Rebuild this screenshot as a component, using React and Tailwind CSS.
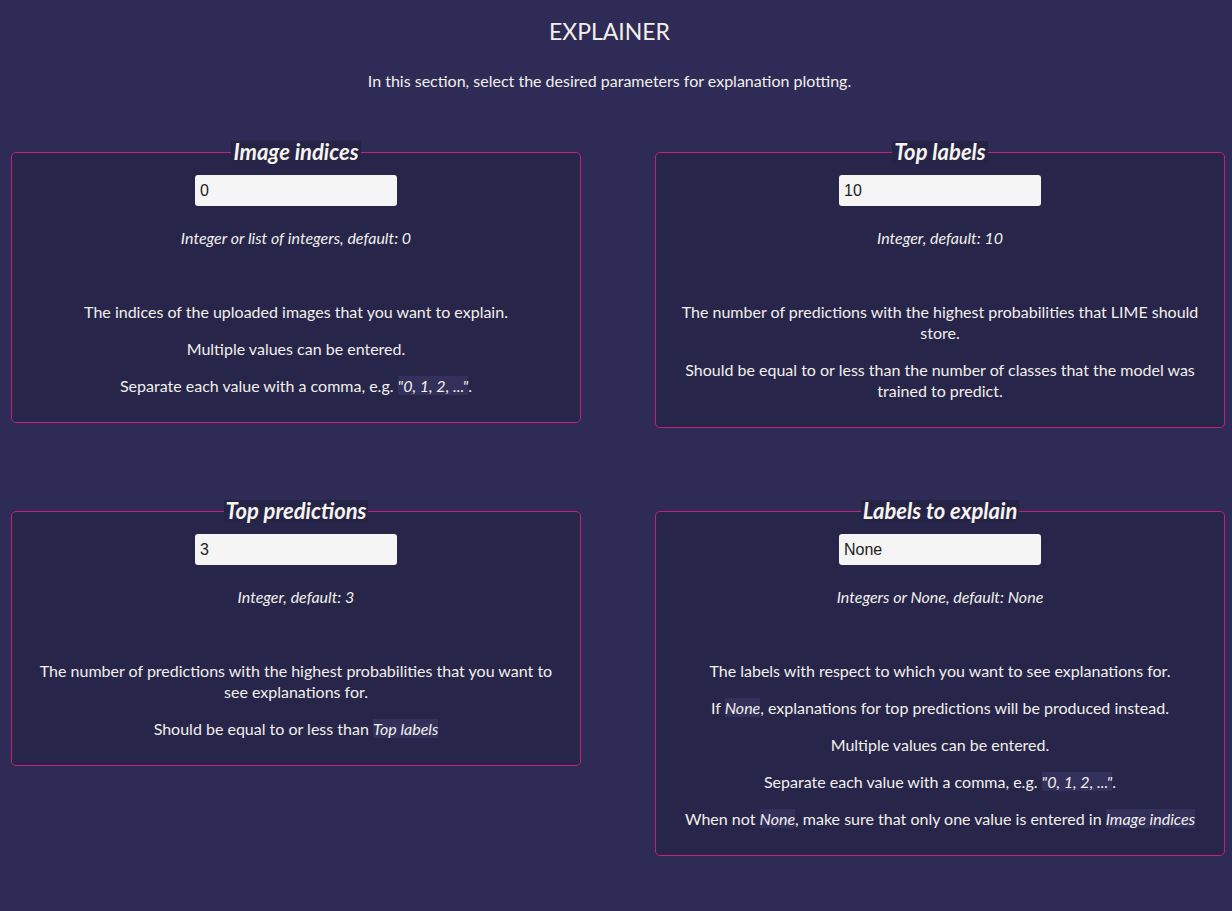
const cards = [
  {
    title: 'Image indices',
    value: '0',
    hint: 'Integer or list of integers, default: 0',
    body: [
      ['The indices of the uploaded images that you want to explain.'],
      ['Multiple values can be entered.'],
      ['Separate each value with a comma, e.g. ', { em: '"0, 1, 2, ..."' }, '.'],
    ],
  },
  {
    title: 'Top labels',
    value: '10',
    hint: 'Integer, default: 10',
    body: [
      ['The number of predictions with the highest probabilities that LIME should store.'],
      ['Should be equal to or less than the number of classes that the model was trained to predict.'],
    ],
  },
  {
    title: 'Top predictions',
    value: '3',
    hint: 'Integer, default: 3',
    body: [
      ['The number of predictions with the highest probabilities that you want to see explanations for.'],
      ['Should be equal to or less than ', { em: 'Top labels' }],
    ],
  },
  {
    title: 'Labels to explain',
    value: 'None',
    hint: 'Integers or None, default: None',
    body: [
      ['The labels with respect to which you want to see explanations for.'],
      ['If ', { em: 'None' }, ', explanations for top predictions will be produced instead.'],
      ['Multiple values can be entered.'],
      ['Separate each value with a comma, e.g. ', { em: '"0, 1, 2, ..."' }, '.'],
      ['When not ', { em: 'None' }, ', make sure that only one value is entered in ', { em: 'Image indices' }],
    ],
  },
];

function Param({ title, value, hint, body }) {
  return (
    <fieldset className="self-start border border-[#c4207f] rounded-[5px] bg-[#27264a] px-5 pb-[10px] text-center">
      <legend className="mx-auto px-[2px] bg-[#252447] text-[22px] leading-[22px] font-bold italic text-[#f7f3ee]">
        {title}
      </legend>
      <input
        defaultValue={value}
        className="mt-[12px] w-[202px] h-[31px] rounded-[3px] bg-[#f5f5f5] px-[5px] text-[16px] text-[#222] outline-none"
        style={{ fontFamily: '"Liberation Sans", Arial, sans-serif' }}
      />
      <p className="mt-[21px] italic text-[16px] leading-[21px]">{hint}</p>
      <div className="mt-[53px]">
        {body.map((parts, i) => (
          <p key={i} className="my-4 text-[16px] leading-[21px]">
            {parts.map((p, j) =>
              typeof p === 'string' ? (
                p
              ) : (
                <em key={j} className="bg-[#33315c]">{p.em}</em>
              )
            )}
          </p>
        ))}
      </div>
    </fieldset>
  );
}

export default function App() {
  return (
    <div
      className="min-h-screen bg-[#2e2b56] text-[#f2efea] pb-12"
      style={{ fontFamily: 'Lato, "Open Sans", sans-serif' }}
    >
      <div className="pr-[13px] text-center">
        <h1 className="pt-[16px] text-[23px] leading-[30px] font-normal">EXPLAINER</h1>
        <p className="mt-[24px] text-[16px] leading-[21px]">
          In this section, select the desired parameters for explanation plotting.
        </p>
      </div>
      <div className="mt-[50px] pl-[11px] grid grid-cols-[570px_570px] gap-x-[74px] gap-y-[72px]">
        {cards.map((c) => (
          <Param key={c.title} {...c} />
        ))}
      </div>
    </div>
  );
}
